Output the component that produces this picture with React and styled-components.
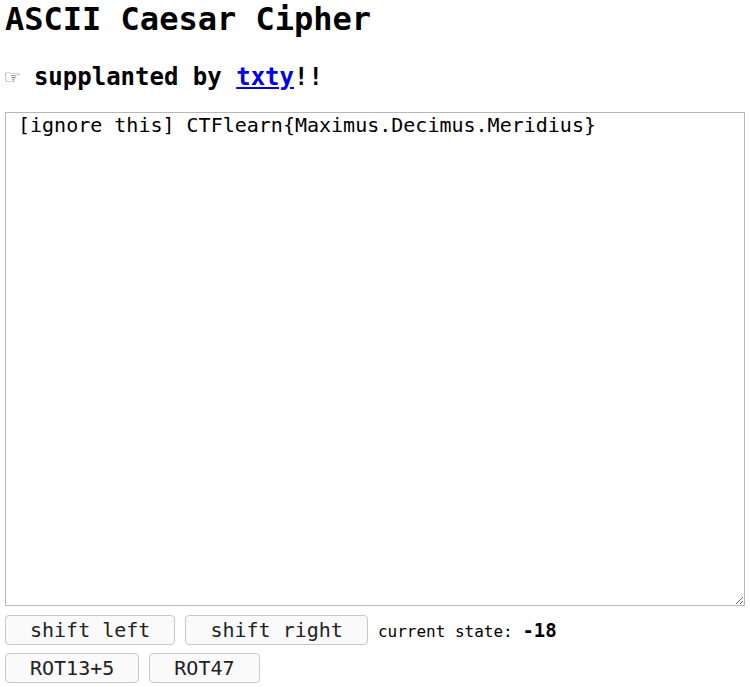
import React, { useState } from 'react';
import styled, { createGlobalStyle } from 'styled-components';

const GlobalStyle = createGlobalStyle`
  body {
    margin: 0;
    background: #fff;
    font-family: 'DejaVu Sans Mono', monospace;
    color: #000;
  }
`

export default function App() {
  const [text, setText] = useState('[ignore this] CTFlearn{Maximus.Decimus.Meridius}');

  return (
    <Page>
      <GlobalStyle />
      <Title>ASCII Caesar Cipher</Title>
      <Subtitle>
        <Hand>☞</Hand> supplanted by <a href="#txty">txty</a>!!
      </Subtitle>
      <TextBox
        value={text}
        onChange={(e) => setText(e.target.value)}
        spellCheck="true"
      />
      <ButtonRow>
        <Button>shift left</Button>
        <Button>shift right</Button>
        <State>current state: <b>-18</b></State>
      </ButtonRow>
      <ButtonRow $tight>
        <Button>ROT13+5</Button>
        <Button>ROT47</Button>
      </ButtonRow>
    </Page>
  )
}

const Page = styled.div`
  padding: 0 5px;
`
const Title = styled.h1`
  font-size: 32px;
  line-height: 37px;
  margin: 1px 0 0;
`
const Subtitle = styled.h2`
  font-size: 24px;
  line-height: 28px;
  margin: 25px 0 21px;

  a {
    color: #0000ee;
  }
`
const Hand = styled.span`
  font-weight: normal;
  color: #555;
`
const TextBox = styled.textarea`
  display: block;
  box-sizing: border-box;
  width: 740px;
  height: 494px;
  margin: 0;
  padding: 0 12px;
  border: 1px solid #b8b8b8;
  font-family: 'DejaVu Sans Mono', monospace;
  font-size: 20px;
  color: #000;
  resize: both;
`
const ButtonRow = styled.div`
  display: flex;
  align-items: center;
  gap: 10px;
  margin-top: ${(p) => (p.$tight ? '8px' : '9px')};
`
const Button = styled.button`
  box-sizing: border-box;
  height: 30px;
  padding: 0 24px;
  background: #fafafa;
  border: 1px solid #c8c8c8;
  border-radius: 4px;
  font-family: 'DejaVu Sans Mono', monospace;
  font-size: 20px;
  color: #222;
`
const State = styled.span`
  font-size: 16px;

  b {
    font-size: 19px;
  }
`
